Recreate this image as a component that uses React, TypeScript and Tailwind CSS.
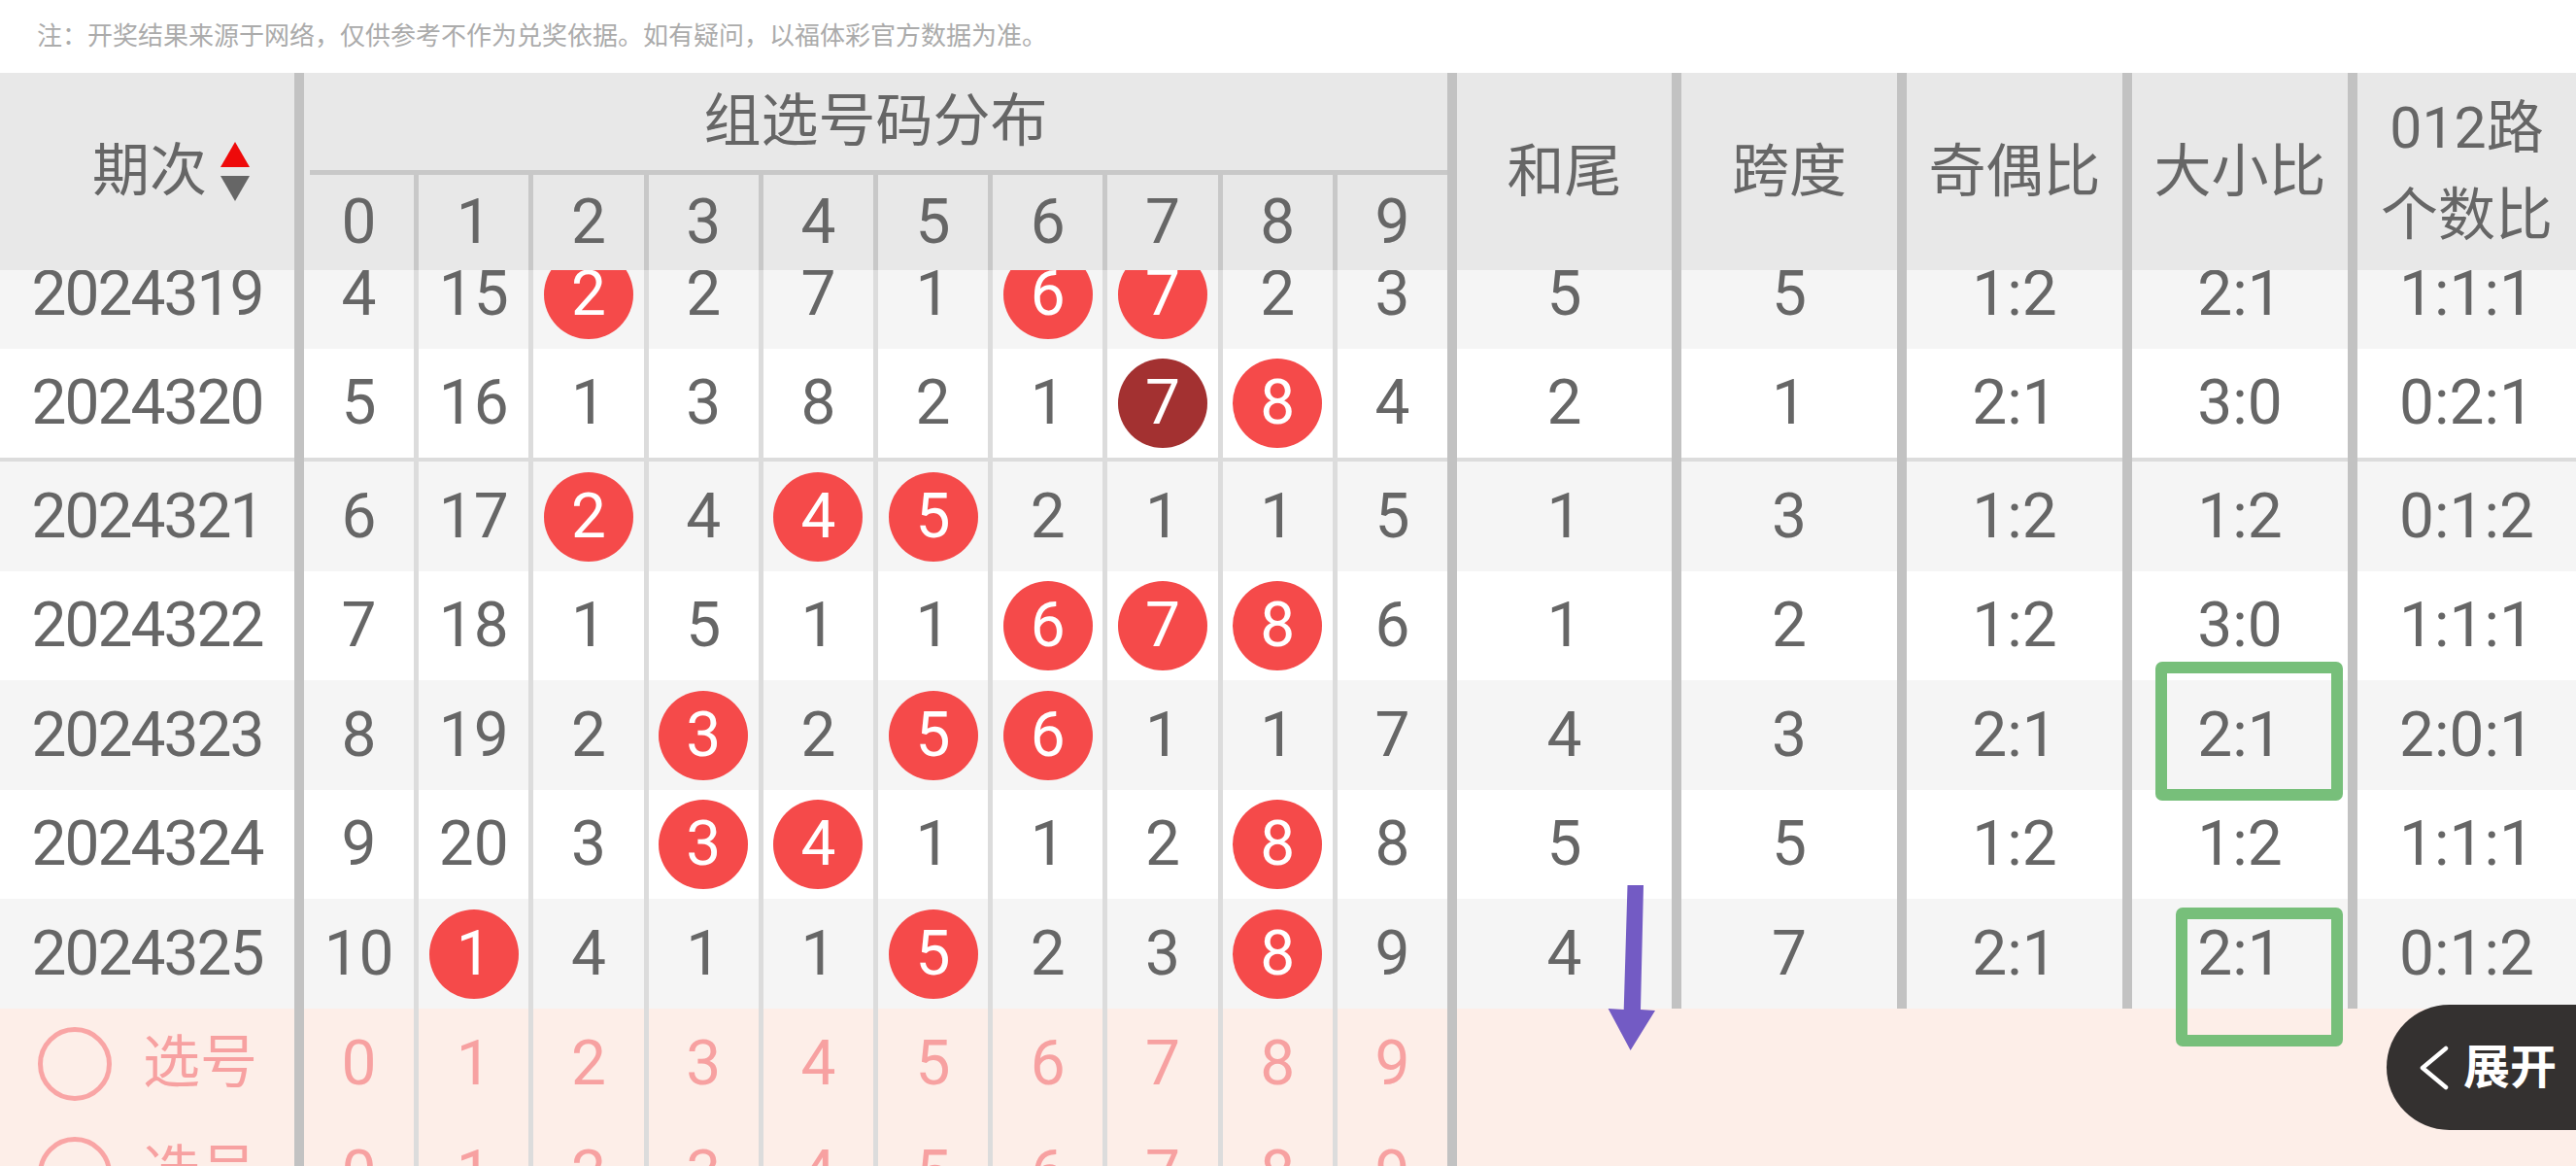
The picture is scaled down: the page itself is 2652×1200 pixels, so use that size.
import React from 'react';

interface DrawRow {
  issue: string;
  nums: number[];
  balls: number[];
  dark?: number[];
  tail: number;
  span: number;
  oe: string;
  bs: string;
  road: string;
}

const rows: DrawRow[] = [
  { issue: '2024319', nums: [4, 15, 2, 2, 7, 1, 6, 7, 2, 3], balls: [2, 6, 7], tail: 5, span: 5, oe: '1:2', bs: '2:1', road: '1:1:1' },
  { issue: '2024320', nums: [5, 16, 1, 3, 8, 2, 1, 7, 8, 4], balls: [8], dark: [7], tail: 2, span: 1, oe: '2:1', bs: '3:0', road: '0:2:1' },
  { issue: '2024321', nums: [6, 17, 2, 4, 4, 5, 2, 1, 1, 5], balls: [2, 4, 5], tail: 1, span: 3, oe: '1:2', bs: '1:2', road: '0:1:2' },
  { issue: '2024322', nums: [7, 18, 1, 5, 1, 1, 6, 7, 8, 6], balls: [6, 7, 8], tail: 1, span: 2, oe: '1:2', bs: '3:0', road: '1:1:1' },
  { issue: '2024323', nums: [8, 19, 2, 3, 2, 5, 6, 1, 1, 7], balls: [3, 5, 6], tail: 4, span: 3, oe: '2:1', bs: '2:1', road: '2:0:1' },
  { issue: '2024324', nums: [9, 20, 3, 3, 4, 1, 1, 2, 8, 8], balls: [3, 4, 8], tail: 5, span: 5, oe: '1:2', bs: '1:2', road: '1:1:1' },
  { issue: '2024325', nums: [10, 1, 4, 1, 1, 5, 2, 3, 8, 9], balls: [1, 5, 8], tail: 4, span: 7, oe: '2:1', bs: '2:1', road: '0:1:2' },
];

const digits = [0, 1, 2, 3, 4, 5, 6, 7, 8, 9];
const statWidths = ['w-[221px]', 'w-[222px]', 'w-[222px]', 'w-[222px]', 'flex-1'];

const ThickSep = () => <div className="w-[10px] shrink-0 bg-[#c2c2c2]" />;

const Ball = ({ value, dark }: { value: number; dark?: boolean }) => (
  <div
    className={`flex h-[92px] w-[92px] items-center justify-center rounded-full text-white ${
      dark ? 'bg-[#a33131]' : 'bg-[#f54a4a]'
    }`}
  >
    {value}
  </div>
);

const Header = () => {
  const labels = [['和尾'], ['跨度'], ['奇偶比'], ['大小比'], ['012路', '个数比']];
  return (
    <div className="flex h-[203px] shrink-0 bg-[#e8e8e8] text-[#666]">
      <div className="flex w-[303px] shrink-0 items-center justify-end gap-[14px] pr-[46px]">
        <span className="text-[59px]">期次</span>
        <svg width="30" height="61" viewBox="0 0 30 61">
          <polygon points="0,26 15,0 30,26" fill="#ee0a0a" />
          <polygon points="0,35 30,35 15,61" fill="#666" />
        </svg>
      </div>
      <ThickSep />
      <div className="flex w-[1177px] shrink-0 flex-col">
        <div className="flex h-[100px] items-center justify-center text-[59px]">组选号码分布</div>
        <div className="ml-[6px] h-[5px] bg-[#c8c8c8]" />
        <div className="grid flex-1 grid-cols-10 gap-x-[5px] bg-[#c8c8c8]">
          {digits.map(d => (
            <div key={d} className="flex items-center justify-center bg-[#e8e8e8] text-[64px]">
              {d}
            </div>
          ))}
        </div>
      </div>
      {labels.map((lines, i) => (
        <React.Fragment key={i}>
          <ThickSep />
          <div className={`flex ${statWidths[i]} shrink-0 flex-col items-center justify-center text-[59px] leading-[90px]`}>
            {lines.map(l => (
              <span key={l}>{l}</span>
            ))}
          </div>
        </React.Fragment>
      ))}
    </div>
  );
};

const DataRow = ({ row, bg, h }: { row: DrawRow; bg: string; h: string }) => {
  const stats = [row.tail, row.span, row.oe, row.bs, row.road];
  return (
    <div className={`flex ${h} shrink-0 ${bg} text-[64px] text-[#666]`}>
      <div className="flex w-[303px] shrink-0 items-center justify-center tracking-[-2px]">{row.issue}</div>
      <ThickSep />
      <div className="grid w-[1177px] shrink-0 grid-cols-10 gap-x-[5px] bg-[#dcdcdc]">
        {row.nums.map((n, i) => (
          <div key={i} className={`flex items-center justify-center ${bg}`}>
            {row.dark?.includes(i) ? (
              <Ball value={n} dark />
            ) : row.balls.includes(i) ? (
              <Ball value={n} />
            ) : (
              n
            )}
          </div>
        ))}
      </div>
      {stats.map((s, i) => (
        <React.Fragment key={i}>
          <ThickSep />
          <div className={`flex ${statWidths[i]} shrink-0 items-center justify-center`}>{s}</div>
        </React.Fragment>
      ))}
    </div>
  );
};

const LineRow = () => (
  <div className="flex h-[4px] shrink-0 bg-[#dcdcdc]">
    <div className="w-[303px] shrink-0" />
    <ThickSep />
    <div className="w-[1177px] shrink-0" />
    {statWidths.map((w, i) => (
      <React.Fragment key={i}>
        <ThickSep />
        <div className={`${w} shrink-0`} />
      </React.Fragment>
    ))}
  </div>
);

const PickRow = () => (
  <div className="flex h-[113px] shrink-0 bg-[#fdeee8] text-[64px] text-[#f7a1a1]">
    <div className="flex w-[303px] shrink-0 items-center gap-[32px] pl-[39px]">
      <div className="h-[76px] w-[76px] rounded-full border-[5px] border-[#f9a5a5]" />
      <span className="text-[59px]">选号</span>
    </div>
    <ThickSep />
    <div className="grid w-[1177px] shrink-0 grid-cols-10 gap-x-[5px] bg-[#dcdcdc]">
      {digits.map(d => (
        <div key={d} className="flex items-center justify-center bg-[#fdeee8]">
          {d}
        </div>
      ))}
    </div>
    <ThickSep />
    <div className="flex-1" />
  </div>
);

const rowHeights = ['h-[113px]', 'h-[112px]', 'h-[113px]', 'h-[112px]', 'h-[113px]', 'h-[112px]', 'h-[113px]'];

export default function App() {
  return (
    <div className="relative flex h-[1200px] w-[2652px] flex-col overflow-hidden bg-white font-['Roboto','Noto_Sans_CJK_SC',sans-serif]">
      <div className="flex h-[75px] shrink-0 items-center pl-[38px] text-[26px] text-[#ababab]">
        注：开奖结果来源于网络，仅供参考不作为兑奖依据。如有疑问，以福体彩官方数据为准。
      </div>
      <Header />
      <div className="flex flex-1 flex-col overflow-hidden">
        <div className="-mt-[32px] flex flex-col">
          {rows.map((r, i) => (
            <React.Fragment key={r.issue}>
              <DataRow row={r} bg={i % 2 === 0 ? 'bg-[#f5f5f5]' : 'bg-white'} h={rowHeights[i]} />
              {i === 1 && <LineRow />}
            </React.Fragment>
          ))}
          <PickRow />
          <PickRow />
        </div>
      </div>

      {/* overlays */}
      <div className="absolute left-[2219px] top-[681px] h-[143px] w-[193px] rounded-[7px] border-[12px] border-[#77bf7a]" />
      <div className="absolute left-[2240px] top-[934px] h-[143px] w-[172px] rounded-[7px] border-[12px] border-[#77bf7a]" />
      <svg className="absolute left-[1650px] top-[905px]" width="60" height="180" viewBox="0 0 60 180">
        <path d="M25.5 6 L42 6 L39 134 L54 135 L28.6 176 L5.6 133 L21.7 134 Z" fill="#735bc4" />
      </svg>
      <div className="absolute left-[2457px] right-0 top-[1034px] flex h-[129px] items-center gap-[15px] rounded-l-full bg-[#343130] pl-[33px] text-white">
        <svg width="31" height="46" viewBox="0 0 31 46">
          <path d="M28 3 L4 23 L28 43" fill="none" stroke="#fff" strokeWidth="4.5" strokeLinejoin="round" strokeLinecap="round" />
        </svg>
        <span className="text-[48px] font-bold">展开</span>
      </div>
    </div>
  );
}
